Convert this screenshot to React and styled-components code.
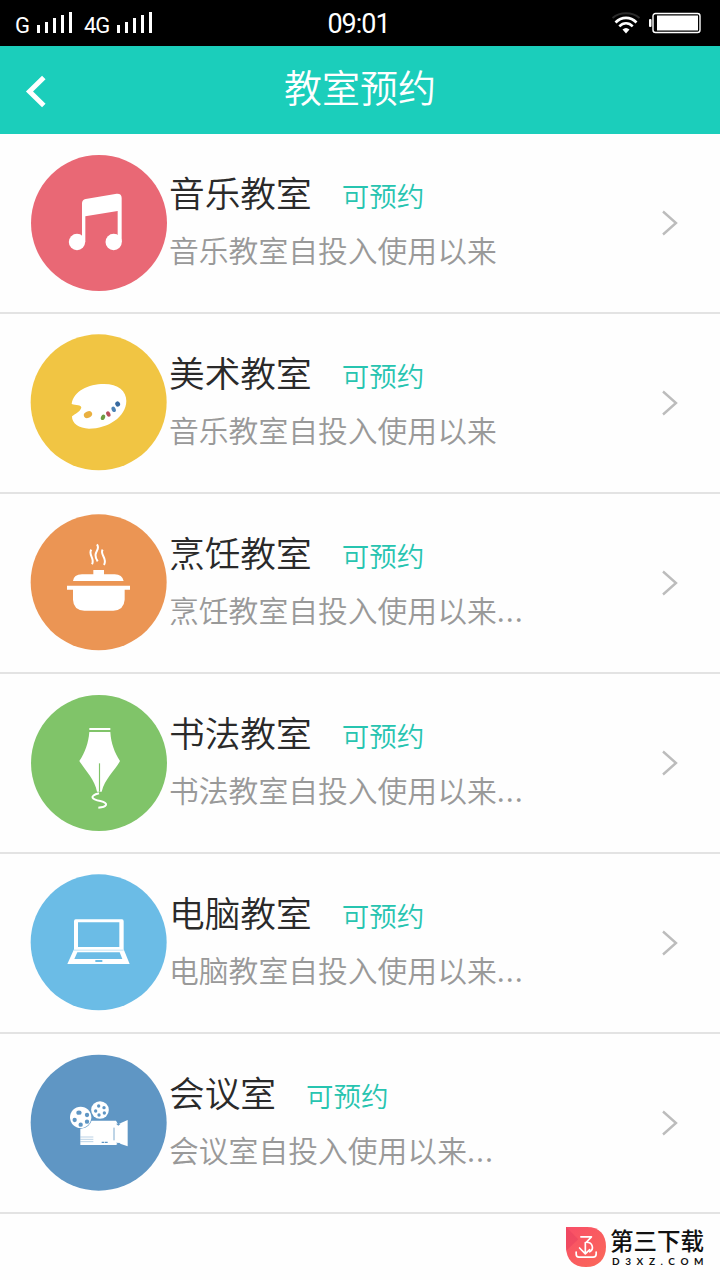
import React from "react";
import styled, { createGlobalStyle } from "styled-components";

const rooms = [
  { name: "音乐教室", desc: "音乐教室自投入使用以来", color: "#e96875", cx: 237, cy: 249, Icon: MusicIcon },
  { name: "美术教室", desc: "音乐教室自投入使用以来", color: "#f1c543", cx: 236, cy: 247, Icon: PaletteIcon },
  { name: "烹饪教室", desc: "烹饪教室自投入使用以来", more: true, color: "#eb9554", cx: 236, cy: 247, Icon: PotIcon },
  { name: "书法教室", desc: "书法教室自投入使用以来", more: true, color: "#80c469", cx: 237, cy: 249, Icon: PenIcon },
  { name: "电脑教室", desc: "电脑教室自投入使用以来", more: true, color: "#6bbce6", cx: 236, cy: 247, Icon: LaptopIcon },
  { name: "会议室", desc: "会议室自投入使用以来", more: true, color: "#5f96c4", cx: 236, cy: 248, Icon: CameraIcon },
];

function App() {
  return (
    <>
      <GlobalStyle />
      <Page>
        <StatusBar>
          <Network>
            <span>G</span>
            <Signal />
            <span>4G</span>
            <Signal />
          </Network>
          <Clock>09:01</Clock>
          <StatusIcons>
            <WifiIcon />
            <BatteryIcon />
          </StatusIcons>
        </StatusBar>
        <Header>
          <BackButton aria-label="返回">
            <svg width="24" height="36" viewBox="0 0 24 36">
              <path d="M19.8 3.5 5.5 17.5 19.8 31.5" fill="none" stroke="#fff" strokeWidth="5" />
            </svg>
          </BackButton>
          <h1>教室预约</h1>
        </Header>
        <RoomList>
          {rooms.map(({ name, desc, more, color, cx, cy, Icon }) => (
            <RoomItem key={name}>
              <RoomIcon viewBox="33 42 408 408">
                <circle cx={cx} cy={cy} r="204" fill={color} />
                <Icon color={color} />
              </RoomIcon>
              <RoomText>
                <RoomTitle>
                  <h2>{name}</h2>
                  <Available>可预约</Available>
                </RoomTitle>
                <Description>
                  {desc}
                  {more && <Dots>...</Dots>}
                </Description>
              </RoomText>
              <Arrow viewBox="0 0 18 28">
                <path d="M2 2.5 15 14 2 25.5" />
              </Arrow>
            </RoomItem>
          ))}
        </RoomList>
        <Footer>
          <LogoIcon />
          <Brand>
            <BrandName>第三下载</BrandName>
            <BrandUrl>D3XZ.COM</BrandUrl>
          </Brand>
        </Footer>
      </Page>
    </>
  );
}

export default App;

function Signal() {
  return (
    <Bars>
      <Bar $h={8} />
      <Bar $h={11} />
      <Bar $h={15} />
      <Bar $h={18} />
      <Bar $h={21} />
    </Bars>
  );
}

function WifiIcon() {
  return (
    <svg width="30" height="22" viewBox="0 0 30 22" fill="none" strokeWidth="2.6">
      <path d="M1.5 6C9-.2 21-.2 28.5 6" stroke="#2b2b2b" strokeWidth="2" />
      <path d="M4.5 10.5C10.5 4.3 19.5 4.3 25.5 10.5" stroke="#fff" />
      <path d="M8.3 14.3C12.3 10.3 17.7 10.3 21.7 14.3" stroke="#fff" />
      <path d="M11.5 17.5Q15 14.5 18.5 17.5L15 21.5Z" fill="#fff" />
    </svg>
  );
}

function BatteryIcon() {
  return (
    <svg width="52" height="22" viewBox="0 0 52 22">
      <rect x="0" y="7" width="2.5" height="8" rx="1" fill="#fff" />
      <rect x="4" y="1.5" width="47" height="19" rx="2.5" fill="none" stroke="#fff" strokeWidth="1.4" />
      <rect x="8" y="3.5" width="41" height="15" fill="#fff" />
    </svg>
  );
}

function MusicIcon() {
  return (
    <g fill="#fff">
      <path d="M186 190Q186 179 197 177L290 161Q305 160 305 174V306H293V213L196 229V306H186Z" />
      <circle cx="171" cy="306" r="24.5" />
      <circle cx="281" cy="306" r="24.5" />
    </g>
  );
}

function PaletteIcon({ color }) {
  return (
    <g>
      <path
        d="M155 252C160 214 205 192 252 192C295 192 319 213 319 243C318 291 264 326 207 326C177 325 155 310 156 289C165 281 179 277 184 263C184 254 168 256 155 252Z"
        fill="#fff"
      />
      <ellipse cx="204" cy="284" rx="13" ry="9.5" transform="rotate(-25 204 284)" fill="#eab040" />
      <ellipse cx="249" cy="292" rx="6" ry="8.5" transform="rotate(25 249 292)" fill="#6e9b42" />
      <ellipse cx="265" cy="282" rx="6" ry="8.5" transform="rotate(-25 265 282)" fill="#b84e5b" />
      <ellipse cx="281" cy="268" rx="6" ry="8.5" transform="rotate(-25 281 268)" fill="#4e83b5" />
      <ellipse cx="293" cy="252" rx="7" ry="8" transform="rotate(-30 293 252)" fill="#376aa0" />
    </g>
  );
}

function PotIcon() {
  return (
    <g fill="#fff">
      <path d="M159 243Q161 224 186 223H220V210H252V223H284Q307 224 311 243Z" />
      <path d="M141 257H330V269H314V299Q312 330 280 332H193Q160 330 159 299V269H141Z" />
      <path
        d="M214 149C203 164 226 175 216 193M231 133C244 151 214 155 233 184M248 149C238 164 264 175 252 195"
        fill="none"
        stroke="#fff"
        strokeWidth="6"
      />
    </g>
  );
}

function PenIcon({ color }) {
  return (
    <g>
      <path d="M208 144H271V150H208ZM208 156H271C273 190 284 218 300 243C286 270 255 295 245 335H231C225 299 195 270 178 243C196 216 205 190 208 156Z" fill="#fff" />
      <path d="M238.5 250V335" stroke={color} strokeWidth="3.5" />
      <path d="M237 340C205 348 216 359 241 363C270 370 259 381 235 383" fill="none" stroke="#fff" strokeWidth="6" />
    </g>
  );
}

function LaptopIcon({ color }) {
  return (
    <g>
      <path fillRule="evenodd" d="M167 178H306Q311 178 311 184V268L329 312H142L162 268V184Q162 178 167 178ZM174 187V261H298V187ZM172 277 163 297H307L299 277Z" fill="#fff" />
      <path d="M162 270.5H311" stroke={color} strokeWidth="2" opacity=".6" />
      <rect x="226" y="300" width="21" height="6" fill={color} />
    </g>
  );
}

function CameraIcon({ color }) {
  return (
    <g>
      <path d="M181 250Q187 242 198 242H288L294 253 323 240V319L296 310 288 315H181Z" fill="#fff" />
      <circle cx="182" cy="232" r="34" fill={color} />
      <circle cx="182" cy="232" r="32" fill="#fff" />
      <circle cx="240" cy="210" r="26.5" fill="#fff" />
      <g fill={color}>
        <ellipse cx="177" cy="218" rx="8" ry="6.5" />
        <circle cx="201" cy="225" r="6.5" />
        <circle cx="164" cy="240" r="6.5" />
        <circle cx="201" cy="245" r="6.5" />
        <circle cx="182" cy="254" r="6.5" />
        <circle cx="236" cy="198" r="5" />
        <circle cx="252" cy="203" r="5" />
        <circle cx="227" cy="213" r="5" />
        <circle cx="253" cy="219" r="5" />
        <circle cx="237" cy="225" r="5" />
        <path d="M288 251 295 257 302 251ZM288 308 295 314 302 309Z" />
      </g>
      <path d="M282 263V301" stroke={color} strokeWidth="3" opacity=".8" />
      <path d="M181 291H220M181 298H220M181 305H220" stroke={color} strokeWidth="2.5" opacity=".5" />
      <path d="M245 307H263" stroke={color} strokeWidth="4" strokeDasharray="8 2" />
    </g>
  );
}

function LogoIcon() {
  return (
    <svg width="40" height="40" viewBox="0 0 118 118">
      <defs>
        <linearGradient id="logo" x1="0" y1="0" x2="1" y2="1">
          <stop offset="0" stopColor="#f84e68" />
          <stop offset="1" stopColor="#fb6958" />
        </linearGradient>
      </defs>
      <path d="M0 0H62C98 0 118 22 118 58S96 118 59 118 0 96 0 58Z" fill="url(#logo)" />
      <path d="M0 0 36 36 0 70Z" fill="#e9435f" opacity=".6" />
      <g fill="none" stroke="#fff" strokeWidth="5" strokeLinecap="round" strokeLinejoin="round">
        <path d="M44 29H75L60 45C80 45 83 66 70 73" />
        <path d="M57 46V78M40 62 57 79 70 67" />
        <path d="M30 74V80Q30 89 38 89H80Q89 89 89 80V74" />
      </g>
    </svg>
  );
}

const GlobalStyle = createGlobalStyle`
  * {
    box-sizing: border-box;
  }

  body {
    margin: 0;
    background: #fff;
    font-family: "Noto Sans CJK SC", sans-serif;
  }

  h1, h2, p, ul {
    margin: 0;
    padding: 0;
  }
`;

const Page = styled.div`
  display: flex;
  flex-direction: column;
  width: 720px;
  height: 1280px;
  overflow: hidden;
  background: #fefefe;
`;

const StatusBar = styled.div`
  display: grid;
  grid-template-columns: 1fr auto 1fr;
  height: 46px;
  padding: 0 19px 0 15px;
  background: #000;
  color: #fff;
  font-family: Roboto, sans-serif;
`;

const Network = styled.div`
  display: flex;
  align-items: flex-end;
  height: 34px;
  font-size: 22px;
  line-height: 16px;
  letter-spacing: -1px;
`;

const Bars = styled.div`
  display: flex;
  align-items: flex-end;
  gap: 5px;
  margin: 0 12px 1px 8px;
`;

const Bar = styled.div`
  width: 3px;
  height: ${({ $h }) => $h}px;
  background: #fff;
`;

const Clock = styled.div`
  padding-left: 1px;
  font-size: 27px;
  line-height: 49px;
  letter-spacing: -1px;
`;

const StatusIcons = styled.div`
  display: flex;
  justify-content: flex-end;
  gap: 8px;
  padding-top: 12px;
`;

const Header = styled.header`
  display: grid;
  grid-template-columns: 60px 1fr 60px;
  height: 88px;
  background: #1bcebb;
  color: #fff;

  & > h1 {
    font-size: 38px;
    font-weight: 350;
    line-height: 80px;
    text-align: center;
  }
`;

const BackButton = styled.button`
  display: flex;
  align-items: center;
  padding: 3px 0 0 24px;
  border: 0;
  background: none;
`;

const RoomList = styled.ul`
  list-style: none;
`;

const RoomItem = styled.li`
  display: flex;
  height: 180px;
  padding: 20px 41px 0 31px;
  border-bottom: 2px solid #e3e3e3;
`;

const RoomIcon = styled.svg`
  flex: none;
  width: 136px;
  height: 136px;
  overflow: visible;
`;

const RoomText = styled.div`
  flex: 1;
  padding: 10px 0 0 2px;
`;

const RoomTitle = styled.div`
  display: flex;
  align-items: baseline;
  gap: 30px;
  height: 54px;

  & > h2 {
    color: #2a2a2a;
    font-size: 35.7px;
    font-weight: 350;
    line-height: 55px;
  }
`;

const Available = styled.span`
  color: #27c4b0;
  font-size: 27.5px;
  font-weight: 350;
`;

const Description = styled.p`
  color: #999;
  font-size: 29.8px;
  font-weight: 350;
  line-height: 62px;
`;

const Dots = styled.span`
  letter-spacing: 1px;
`;

const Arrow = styled.svg`
  flex: none;
  width: 18px;
  height: 28px;
  margin-top: 55px;
  fill: none;
  stroke: #bcbcbc;
  stroke-width: 2.4;
`;

const Footer = styled.footer`
  display: flex;
  gap: 4px;
  padding: 13px 14px 0 566px;
`;

const Brand = styled.div`
  width: 96px;
  color: #111;
`;

const BrandName = styled.div`
  font-size: 23.5px;
  font-weight: 500;
  line-height: 27px;
  white-space: nowrap;
`;

const BrandUrl = styled.div`
  padding-left: 2px;
  font-family: Lato, sans-serif;
  font-size: 10px;
  font-weight: 700;
  line-height: 14px;
  letter-spacing: 5.6px;
  white-space: nowrap;
`;
